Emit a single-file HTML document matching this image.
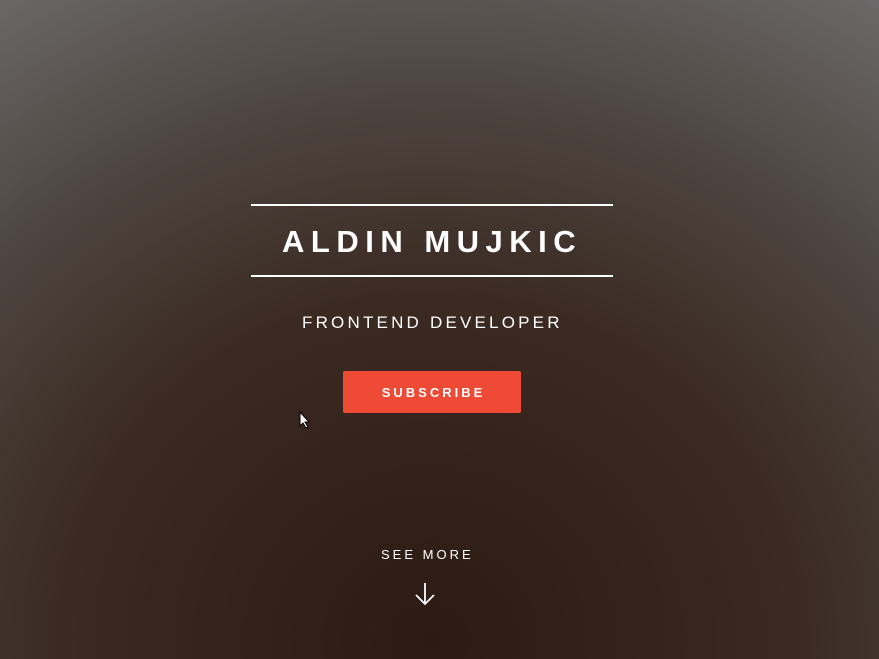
<!DOCTYPE html>
<html><head><style>
html,body{margin:0;width:879px;height:659px;overflow:hidden}
body{background:radial-gradient(ellipse 820px 760px at 430px 640px,#2c1b13 0%,#3a2a22 45%,#4e4540 72%,#6a6868 100%);font-family:"Liberation Sans",sans-serif;color:#fff;position:relative}
.line{position:absolute;left:251px;width:362px;height:2px;background:#fff}
.t{position:absolute;white-space:nowrap}
h1{margin:0;font-size:31px;font-weight:bold;letter-spacing:6.5px;top:224px;left:282px}
.sub{font-size:17px;letter-spacing:3.2px;top:313px;left:302px}
.btn{position:absolute;left:343px;top:371px;width:178px;height:42px;background:#ee4a35;border-radius:2px;text-align:center;line-height:43px;font-size:13px;font-weight:bold;letter-spacing:3px;text-indent:3px}
.more{font-size:13px;letter-spacing:3px;top:547px;left:381px}
</style></head><body>
<div class="line" style="top:204px"></div>
<h1 class="t">ALDIN MUJKIC</h1>
<div class="line" style="top:275px"></div>
<div class="t sub">FRONTEND DEVELOPER</div>
<div class="btn">SUBSCRIBE</div>
<div class="t more">SEE MORE</div>
<svg style="position:absolute;left:414px;top:582px" width="22" height="24" viewBox="0 0 22 24"><path d="M11 1V22M2 13l9 9 9-9" stroke="#fff" stroke-width="1.8" fill="none"/></svg>
<svg style="position:absolute;left:299px;top:411px" width="12" height="18" viewBox="0 0 12 18"><path d="M1 1v14l3-3 3 5 2-1-3-5h4z" fill="#fff" stroke="#000" stroke-width="1"/></svg>
</body></html>
